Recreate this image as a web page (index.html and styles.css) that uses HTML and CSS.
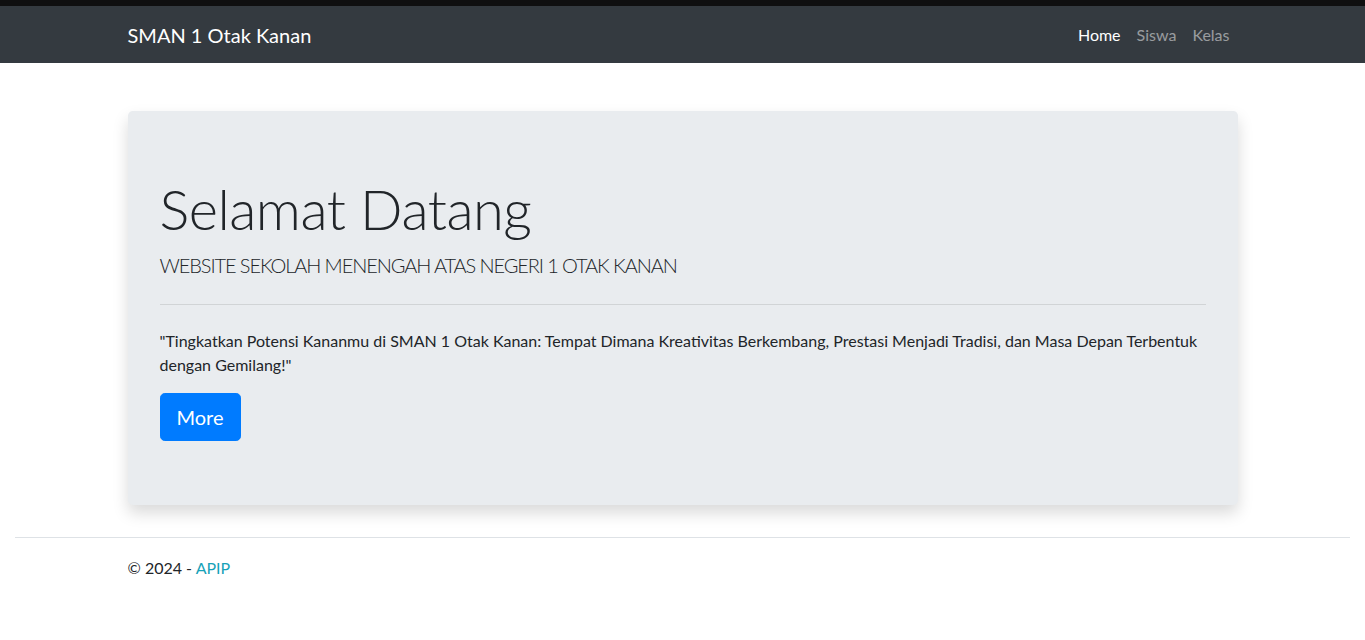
FILE: index.html
```html
<!DOCTYPE html>
<html lang="id">
<head>
<meta charset="utf-8">
<title>SMAN 1 Otak Kanan</title>
<link rel="stylesheet" href="styles.css">
</head>
<body>
<div class="topstrip"></div>
<header>
  <nav class="navbar">
    <div class="container nav-inner">
      <a class="brand" href="#">SMAN 1 Otak Kanan</a>
      <ul class="nav">
        <li><a class="nav-link active" href="#">Home</a></li>
        <li><a class="nav-link" href="#">Siswa</a></li>
        <li><a class="nav-link" href="#">Kelas</a></li>
      </ul>
    </div>
  </nav>
</header>
<main class="container main">
  <div class="jumbotron">
    <h1 class="display">Selamat Datang</h1>
    <p class="lead">WEBSITE SEKOLAH MENENGAH ATAS NEGERI 1 OTAK KANAN</p>
    <hr class="divider">
    <p class="quote">"Tingkatkan Potensi Kananmu di SMAN 1 Otak Kanan: Tempat Dimana Kreativitas Berkembang, Prestasi Menjadi Tradisi, dan Masa Depan Terbentuk dengan Gemilang!"</p>
    <a class="btn" href="#">More</a>
  </div>
</main>
<footer class="footer">
  <div class="container">&copy; 2024 - <a class="footer-link" href="#">APIP</a></div>
</footer>
</body>
</html>
```
FILE: styles.css
```css
* { box-sizing: border-box; }
html, body { margin: 0; padding: 0; }
body {
  font-family: "Lato", "Noto Sans", sans-serif;
  font-size: 16px;
  line-height: 1.5;
  color: #212529;
  background: #fff;
}
a { text-decoration: none; }
.topstrip { height: 6px; background: #0f0f10; }
.container {
  width: 1140px;
  margin: 0 auto;
  padding: 0 15px;
}
.navbar {
  background: #343a40;
  padding: 8px 0;
  height: 57px;
}
.nav-inner {
  display: flex;
  align-items: center;
  justify-content: space-between;
  height: 41px;
}
.brand {
  color: #fff;
  font-size: 20px;
  line-height: 30px;
  padding: 5px 0;
}
.nav {
  display: flex;
  list-style: none;
  margin: 0;
  padding: 0;
}
.nav-link {
  display: block;
  padding: 8px 8px;
  color: rgba(255,255,255,.5);
}
.nav-link.active { color: #fff; }
.main { padding-top: 48px; }
.jumbotron {
  background: #e9ecef;
  border-radius: 4.8px;
  padding: 64px 32px;
  margin-bottom: 32px;
  box-shadow: 0 8px 16px rgba(0,0,0,.15);
}
.display {
  font-size: 56px;
  font-weight: 300;
  line-height: 1.2;
  letter-spacing: -0.5px;
  margin: 0 0 8px;
}
.lead {
  font-size: 20px;
  font-weight: 300;
  letter-spacing: -1.1px;
  margin: 0 0 16px;
}
.divider {
  margin: 24px 0;
  border: 0;
  border-top: 1px solid rgba(0,0,0,.1);
}
.quote { margin: 0 0 16px; }
.btn {
  display: inline-block;
  vertical-align: top;
  background: #007bff;
  border: 1px solid #007bff;
  color: #fff;
  font-size: 20px;
  line-height: 30px;
  padding: 8px 16px;
  border-radius: 4.8px;
}
.footer {
  border-top: 1px solid #dee2e6;
  margin: 0 15px;
  line-height: 60px;
  white-space: nowrap;
}
.footer-link { color: #17a2b8; }
```
